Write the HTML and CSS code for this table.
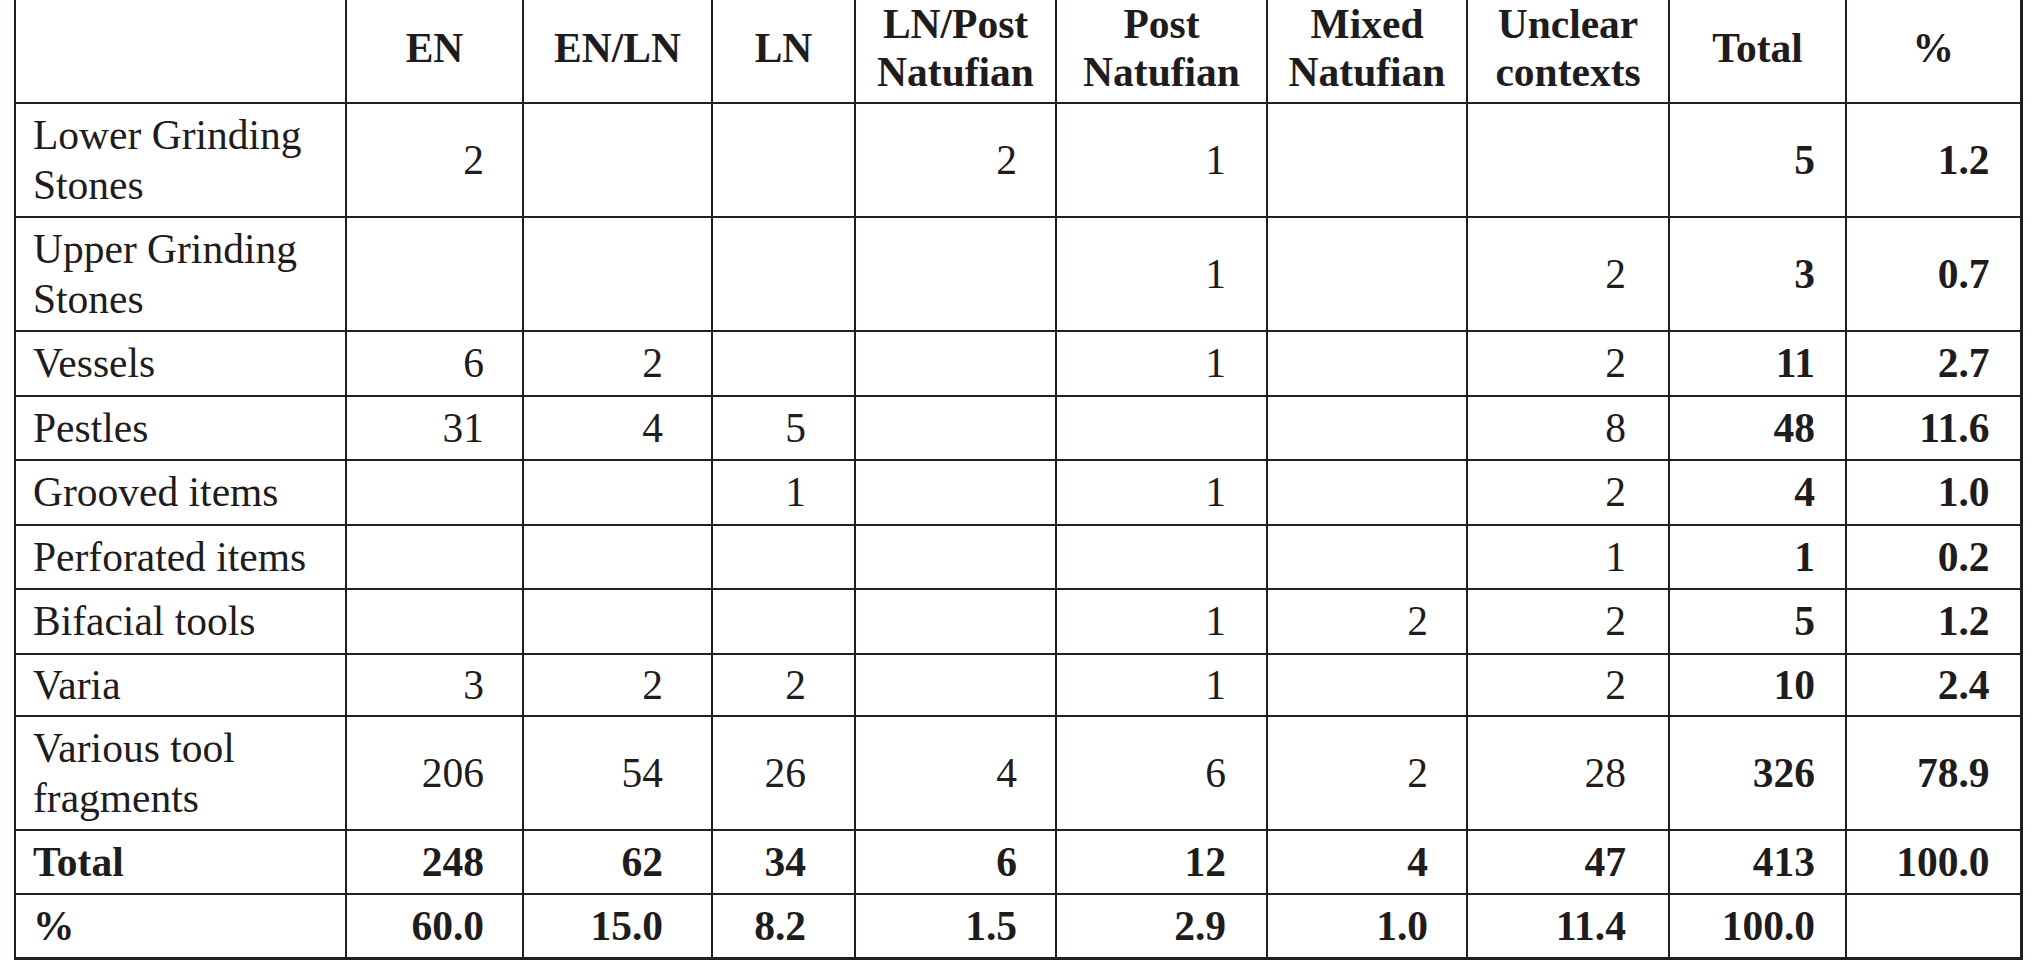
FILE: index.html
```html
<!DOCTYPE html>
<html>
<head>
<meta charset="utf-8">
<link rel="stylesheet" href="styles.css">
</head>
<body>
<table class="tbl">
  <colgroup>
    <col class="c-label"><col class="c-en"><col class="c-enln"><col class="c-ln"><col class="c-lnpost"><col class="c-post"><col class="c-mixed"><col class="c-unclear"><col class="c-total"><col class="c-pct">
  </colgroup>
  <thead>
    <tr class="r-head">
      <th></th>
      <th>EN</th>
      <th>EN/LN</th>
      <th>LN</th>
      <th>LN/Post<br>Natufian</th>
      <th>Post<br>Natufian</th>
      <th>Mixed<br>Natufian</th>
      <th>Unclear<br>contexts</th>
      <th>Total</th>
      <th>%</th>
    </tr>
  </thead>
  <tbody>
    <tr class="r-double">
      <td>Lower Grinding<br>Stones</td><td>2</td><td></td><td></td><td>2</td><td>1</td><td></td><td></td><td>5</td><td>1.2</td>
    </tr>
    <tr class="r-double">
      <td>Upper Grinding<br>Stones</td><td></td><td></td><td></td><td></td><td>1</td><td></td><td>2</td><td>3</td><td>0.7</td>
    </tr>
    <tr class="r-single">
      <td>Vessels</td><td>6</td><td>2</td><td></td><td></td><td>1</td><td></td><td>2</td><td>11</td><td>2.7</td>
    </tr>
    <tr class="r-single">
      <td>Pestles</td><td>31</td><td>4</td><td>5</td><td></td><td></td><td></td><td>8</td><td>48</td><td>11.6</td>
    </tr>
    <tr class="r-single">
      <td>Grooved items</td><td></td><td></td><td>1</td><td></td><td>1</td><td></td><td>2</td><td>4</td><td>1.0</td>
    </tr>
    <tr class="r-single">
      <td>Perforated items</td><td></td><td></td><td></td><td></td><td></td><td></td><td>1</td><td>1</td><td>0.2</td>
    </tr>
    <tr class="r-single">
      <td>Bifacial tools</td><td></td><td></td><td></td><td></td><td>1</td><td>2</td><td>2</td><td>5</td><td>1.2</td>
    </tr>
    <tr class="r-short">
      <td>Varia</td><td>3</td><td>2</td><td>2</td><td></td><td>1</td><td></td><td>2</td><td>10</td><td>2.4</td>
    </tr>
    <tr class="r-double">
      <td>Various tool<br>fragments</td><td>206</td><td>54</td><td>26</td><td>4</td><td>6</td><td>2</td><td>28</td><td>326</td><td>78.9</td>
    </tr>
    <tr class="r-single r-bold">
      <td>Total</td><td>248</td><td>62</td><td>34</td><td>6</td><td>12</td><td>4</td><td>47</td><td>413</td><td>100.0</td>
    </tr>
    <tr class="r-single r-bold">
      <td>%</td><td>60.0</td><td>15.0</td><td>8.2</td><td>1.5</td><td>2.9</td><td>1.0</td><td>11.4</td><td>100.0</td><td></td>
    </tr>
  </tbody>
</table>
</body>
</html>
```

FILE: styles.css
```css
html, body {
  margin: 0;
  padding: 0;
  background: #ffffff;
}

body {
  font-family: "Liberation Serif", "Times New Roman", serif;
  color: #1f1c1d;
}

.tbl {
  margin-left: 14px;
  width: 2006px;
  table-layout: fixed;
  border-collapse: collapse;
  font-size: 41.5px;
  line-height: 50px;
}

.c-label { width: 331px; }
.c-en { width: 177px; }
.c-enln { width: 189px; }
.c-ln { width: 143px; }
.c-lnpost { width: 201px; }
.c-post { width: 211px; }
.c-mixed { width: 200px; }
.c-unclear { width: 202px; }
.c-total { width: 177px; }
.c-pct { width: 175px; }

.tbl th,
.tbl td {
  border: 2px solid #231f20;
  padding: 0;
  vertical-align: middle;
}

.tbl th {
  border-top: none;
  font-weight: bold;
  text-align: center;
  line-height: 48px;
  padding-bottom: 6px;
}

.r-head { height: 102px; }
.r-double { height: 114px; }
.r-single { height: 64.5px; }
.r-short { height: 62px; }

.tbl td {
  text-align: right;
  padding-right: 38px;
  white-space: nowrap;
}

.tbl td:first-child {
  text-align: left;
  padding-left: 17px;
  padding-right: 0;
}

.tbl td:nth-child(3),
.tbl td:nth-child(4) {
  padding-right: 48px;
}

.tbl td:nth-child(6) {
  padding-right: 40px;
}

.tbl td:nth-child(8) {
  padding-right: 42px;
}

.tbl td:nth-child(9),
.tbl td:nth-child(10) {
  font-weight: bold;
  padding-right: 30px;
}

.r-bold td {
  font-weight: bold;
}

.tbl tr:last-child td {
  border-bottom-width: 3px;
}

.tbl th:last-child,
.tbl td:last-child {
  border-right-width: 3px;
}
```
